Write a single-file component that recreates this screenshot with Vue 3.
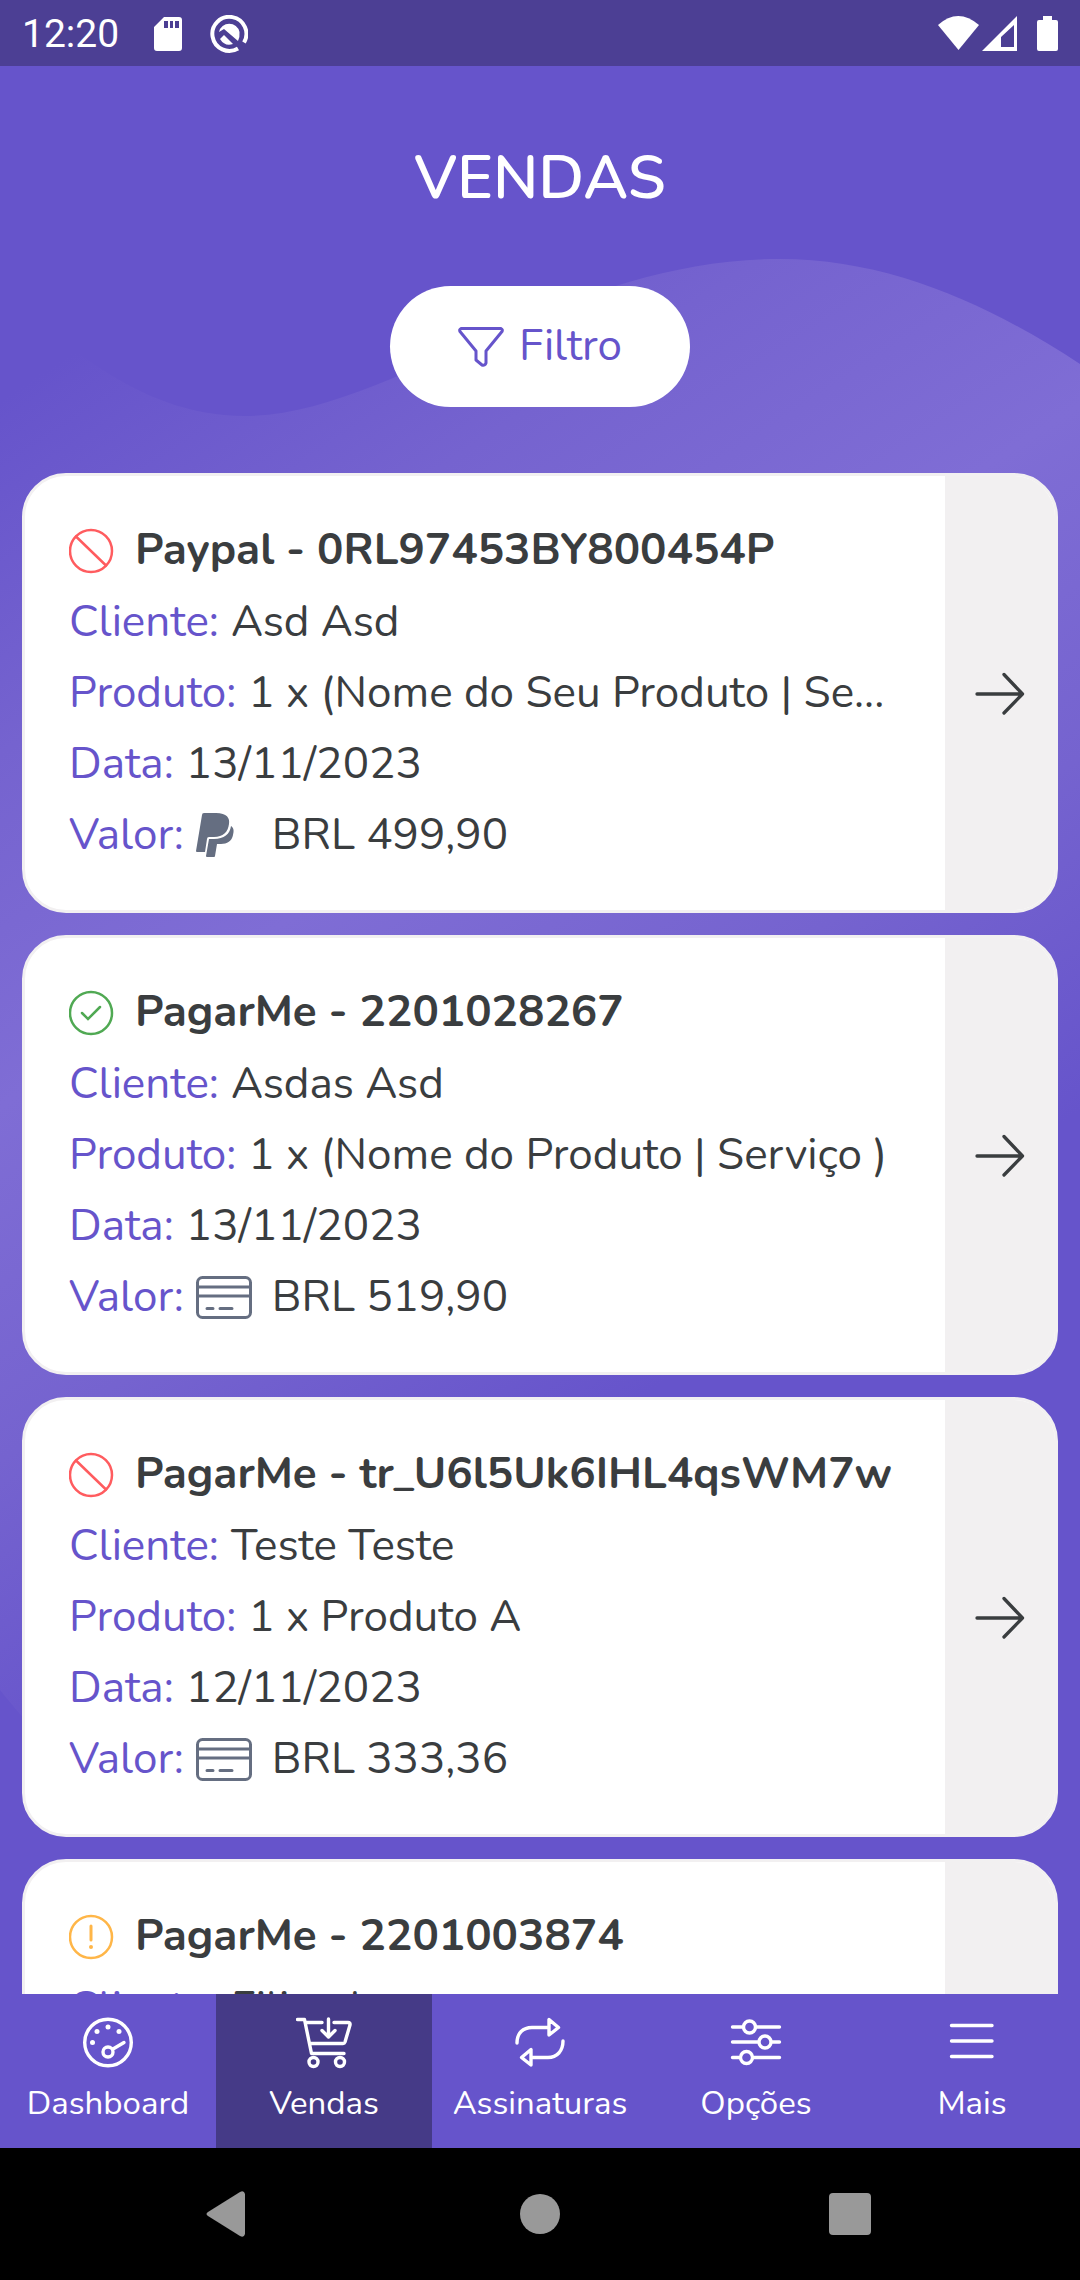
<script setup>
const sales = [
  { id: 1, status: 'refused', title: 'Paypal - 0RL97453BY800454P', client: 'Asd Asd', product: '1 x (Nome do Seu Produto | Se...', date: '13/11/2023', method: 'paypal', value: 'BRL 499,90' },
  { id: 2, status: 'paid', title: 'PagarMe - 2201028267', client: 'Asdas Asd', product: '1 x (Nome do Produto | Serviço )', date: '13/11/2023', method: 'card', value: 'BRL 519,90' },
  { id: 3, status: 'refused', title: 'PagarMe - tr_U6l5Uk6IHL4qsWM7w', client: 'Teste Teste', product: '1 x Produto A', date: '12/11/2023', method: 'card', value: 'BRL 333,36' },
  { id: 4, status: 'pending', title: 'PagarMe - 2201003874', client: 'Filipe l' },
]

const tabs = [
  { id: 'dashboard', label: 'Dashboard' },
  { id: 'vendas', label: 'Vendas', active: true },
  { id: 'assinaturas', label: 'Assinaturas' },
  { id: 'opcoes', label: 'Opções' },
  { id: 'mais', label: 'Mais' },
]
</script>

<template>
  <div class="app">
    <svg class="wave" viewBox="0 0 1080 1800" aria-hidden="true">
      <defs>
        <linearGradient id="waveFill" gradientUnits="userSpaceOnUse" x1="183" y1="281" x2="829" y2="1275">
          <stop offset="0" stop-color="#6654cb" />
          <stop offset=".25" stop-color="#7563cf" />
          <stop offset=".5" stop-color="#7f6dd5" />
          <stop offset=".75" stop-color="#7563cf" />
          <stop offset="1" stop-color="#6654cb" />
        </linearGradient>
      </defs>
      <path fill="url(#waveFill)" d="M0 300C60 330 130 416 245 416C390 416 560 259 780 259C890 259 990 305 1080 364V1800H120C80 1780 40 1740 0 1690Z" />
    </svg>

    <header class="status-bar">
      <time>12:20</time>
      <svg class="sd" width="28" height="34" viewBox="0 0 28 34" aria-hidden="true">
        <path fill="#fff" fill-rule="evenodd" d="M10 0H25Q28 0 28 3V31Q28 34 25 34H3Q0 34 0 31V10ZM10 4V11H14V4ZM16 4V11H19V4ZM21 4V11H25V4Z" />
      </svg>
      <svg class="q" width="38" height="38" viewBox="0 0 38 38" aria-hidden="true">
        <path fill="none" stroke="#fff" stroke-width="4" d="M28 33.500A17 17 0 1 1 34 27.500" />
        <path fill="#fff" d="M9 17A10.500 10.500 0 0 1 29.500 17Q30 22 28 26L14 14Z" />
        <path fill="#fff" d="M10 24L14 20L23 29Q15 32 10 24Z" />
      </svg>
      <span class="spacer"></span>
      <svg width="120" height="36" viewBox="0 0 120 36" aria-label="Rede e bateria">
        <path fill="#fff" d="M0 9Q20 -9 41 9L20.500 34Z" />
        <path fill="#fff" fill-rule="evenodd" d="M44 35L79 0V35ZM63 31H76V9L63 21Z" />
        <path fill="#fff" d="M105 0H114V4H118Q120 4 120 6V33Q120 35 118 35H101Q99 35 99 33V6Q99 4 101 4H105Z" />
      </svg>
    </header>

    <section class="heading">
      <h1>VENDAS</h1>
      <button type="button" class="filter">
        <svg width="46" height="40" viewBox="0 0 46 40" fill="none" stroke="currentColor" stroke-width="3" stroke-linejoin="round" aria-hidden="true">
          <path d="M3 1.500H43Q45 2.500 44 4.500L28 24V36Q27 39 24 38L18 33V24L2 4.500Q1 2.500 3 1.500Z" />
        </svg>
        <span>Filtro</span>
      </button>
    </section>

    <main class="list">
      <article v-for="sale in sales" :key="sale.id" class="card">
        <div class="info">
          <h2>
            <svg :class="['state', sale.status]" width="46" height="46" viewBox="0 0 46 46" fill="none" stroke="currentColor" stroke-width="2.500" stroke-linecap="round" aria-hidden="true">
              <circle cx="22" cy="23" r="21" />
              <path v-if="sale.status === 'refused'" d="M7 8.500L37 37.500" />
              <path v-else-if="sale.status === 'paid'" d="M13 23L19 29L31 17" />
              <template v-else>
                <path stroke-width="3" d="M22 12V26" />
                <circle cx="22" cy="33" r="2" fill="currentColor" stroke="none" />
              </template>
            </svg>
            <span>{{ sale.title }}</span>
          </h2>
          <dl>
            <div><dt>Cliente:</dt><dd>{{ sale.client }}</dd></div>
            <div v-if="sale.product"><dt>Produto:</dt><dd>{{ sale.product }}</dd></div>
            <div v-if="sale.date"><dt>Data:</dt><dd>{{ sale.date }}</dd></div>
            <div v-if="sale.value">
              <dt>Valor:</dt>
              <dd class="value">
                <svg v-if="sale.method === 'paypal'" width="56" height="45" viewBox="0 0 56 45" fill="#656e81" aria-label="PayPal">
                  <path d="M6 2Q6 0 8 0H20C31 0 34 5 33 11C32 19 27 24 18 24H13Q11 24 11 26L9 39H1Q0 39 0 38Z" />
                  <path d="M35 13C38 15 38 18 37 22C36 28 31 31 25 31H21L19 43Q19 44 18 44H11Q10 44 10 43L13 26H18C28 26 34 21 35 13Z" />
                </svg>
                <svg v-else width="56" height="45" viewBox="0 0 56 45" fill="none" stroke="#656e81" stroke-width="3" aria-label="Cartão">
                  <rect x="1.500" y="2.500" width="53" height="40" rx="5" />
                  <path d="M2 12H54M2 21H54" />
                  <path stroke-linecap="round" d="M11 33.500H17M24 33.500H36" />
                </svg>
                <span>{{ sale.value }}</span>
              </dd>
            </div>
          </dl>
        </div>
        <button type="button" class="open" aria-label="Abrir venda">
          <svg width="50" height="44" viewBox="0 0 50 44" fill="none" stroke="currentColor" stroke-width="3.300" stroke-linecap="round" stroke-linejoin="round" aria-hidden="true">
            <path d="M2 23H47.500M29 3.500L47.500 23L29 42" />
          </svg>
        </button>
      </article>
    </main>

    <nav class="tabs">
      <a v-for="tab in tabs" :key="tab.id" :href="'#' + tab.id" :class="{ active: tab.active }">
        <svg width="56" height="56" viewBox="0 0 56 56" fill="none" stroke="#fff" stroke-width="3.400" stroke-linecap="round" stroke-linejoin="round" aria-hidden="true">
          <template v-if="tab.id === 'dashboard'">
            <circle cx="28" cy="28.500" r="23.300" />
            <circle cx="28" cy="38" r="5" />
            <path d="M33 35L44 28.500" />
            <g fill="#fff" stroke="none">
              <circle cx="28" cy="13" r="2.500" /><circle cx="17" cy="17.500" r="2.500" />
              <circle cx="39" cy="17.500" r="2.500" /><circle cx="12.500" cy="28.500" r="2.500" />
            </g>
          </template>
          <template v-else-if="tab.id === 'vendas'">
            <path d="M1.500 5.500H8.500L15.500 39.500H48M10 8.500H26M38 8.500H52Q54.500 8.500 54 11L49 28Q48.500 29.500 47 29.500H14" />
            <path d="M32.500 5V22M26 16.500L32.500 23L39 16.500" />
            <circle cx="17.500" cy="48" r="4.500" /><circle cx="44" cy="48" r="4.500" />
          </template>
          <template v-else-if="tab.id === 'assinaturas'">
            <path d="M5 29C5 19 11 13.500 20 13.500H37M37 5.500V21L46.500 13.500Z" />
            <path d="M51 27C51 37 45 43.500 36 43.500H19M19 35.500V51L9.500 43.500Z" />
          </template>
          <template v-else-if="tab.id === 'opcoes'">
            <path d="M4.500 13H14M28 13H51.500M4.500 28H30M44 28H51.500M4.500 43.500H11M25 43.500H51.500" />
            <circle cx="21.500" cy="13" r="6" /><circle cx="37" cy="28" r="6" /><circle cx="18.500" cy="43.500" r="6" />
          </template>
          <path v-else d="M7.500 11.500H48M7.500 27H48M7.500 42.500H48" />
        </svg>
        <span>{{ tab.label }}</span>
      </a>
    </nav>

    <footer class="system">
      <button type="button" aria-label="Voltar">
        <svg width="48" height="46" viewBox="0 0 48 46"><path fill="#999" d="M2 21L34 1Q38 -1 39 3V43Q38 47 34 45L2 25Q-1 23 2 21Z" /></svg>
      </button>
      <button type="button" aria-label="Início">
        <svg width="40" height="40" viewBox="0 0 40 40"><circle cx="20" cy="20" r="20" fill="#999" /></svg>
      </button>
      <button type="button" aria-label="Recentes">
        <svg width="42" height="42" viewBox="0 0 42 42"><rect width="42" height="42" rx="4" fill="#999" /></svg>
      </button>
    </footer>
  </div>
</template>

<style>
body {
  margin: 0;
  background: #6654cb;
}
</style>

<style scoped>
.app {
  position: relative;
  display: flex;
  flex-direction: column;
  height: 100vh;
  overflow: hidden;
  background: #6654cb;
  color: #3a3d3f;
  font-family: Nunito, "Open Sans", sans-serif;
  font-size: 44px;
}

button {
  padding: 0;
  border: 0;
  background: none;
  font: inherit;
  color: inherit;
}

svg {
  display: block;
  flex: none;
}

.wave {
  position: absolute;
  top: 0;
  left: 0;
  width: 100%;
  height: auto;
}

.status-bar {
  position: relative;
  display: flex;
  flex: none;
  align-items: center;
  box-sizing: border-box;
  height: 66px;
  padding: 2px 22px 0;
  background: #4c3f94;
  color: #fff;
  font-family: Roboto, sans-serif;
  font-size: 39px;
}

.sd {
  margin-left: 35px;
}

.q {
  margin-left: 28px;
}

.spacer {
  flex: 1;
}

.heading {
  position: relative;
  display: flex;
  flex: none;
  flex-direction: column;
  align-items: center;
  padding: 72px 22px 66px;
  color: #fff;
}

h1 {
  margin: 0 0 68px;
  font-size: 61px;
  font-weight: 600;
  line-height: 80px;
}

.filter {
  display: flex;
  align-items: center;
  gap: 15px;
  height: 121px;
  padding: 0 68px;
  border-radius: 61px;
  background: #fff;
  color: #6654cb;
}

.filter span {
  padding-bottom: 2px;
}

.list {
  position: relative;
  display: flex;
  flex: 1;
  flex-direction: column;
  gap: 22px;
  min-height: 0;
  padding: 0 22px;
  overflow: hidden;
}

.card {
  display: flex;
  flex: none;
  box-sizing: border-box;
  min-height: 440px;
  overflow: hidden;
  border: 3px solid #f2f0f1;
  border-radius: 44px;
  background: #fff;
}

.info {
  flex: 1;
  min-width: 0;
  padding: 39px 44px 38px;
  white-space: nowrap;
}

h2 {
  display: flex;
  align-items: center;
  gap: 20px;
  margin: 0 0 1px;
  font-size: 44px;
  font-weight: 700;
  line-height: 71px;
}

.refused {
  color: #ff5c5f;
}

.paid {
  color: #50a953;
}

.pending {
  color: #ffb648;
}

dl,
dd {
  margin: 0;
}

dl > div {
  display: flex;
  gap: 12px;
  line-height: 71px;
}

dt {
  color: #6654cb;
}

.value {
  display: flex;
  align-items: center;
  gap: 20px;
}

.open {
  display: flex;
  align-items: center;
  justify-content: center;
  width: 110px;
  background: #f2f0f1;
}

.tabs {
  position: relative;
  display: grid;
  flex: none;
  grid-template-columns: repeat(5, 1fr);
  height: 154px;
  background: #6654cb;
}

.tabs a {
  display: flex;
  flex-direction: column;
  align-items: center;
  padding-top: 20px;
  color: #fff;
  font-size: 33px;
  line-height: 40px;
  text-decoration: none;
}

.tabs span {
  padding-top: 14px;
}

.tabs .active {
  background: #453a87;
}

.system {
  position: relative;
  display: grid;
  flex: none;
  grid-template-columns: repeat(3, 1fr);
  height: 132px;
  padding: 0 75px;
  background: #000;
}

.system button {
  display: flex;
  align-items: center;
  justify-content: center;
}
</style>
